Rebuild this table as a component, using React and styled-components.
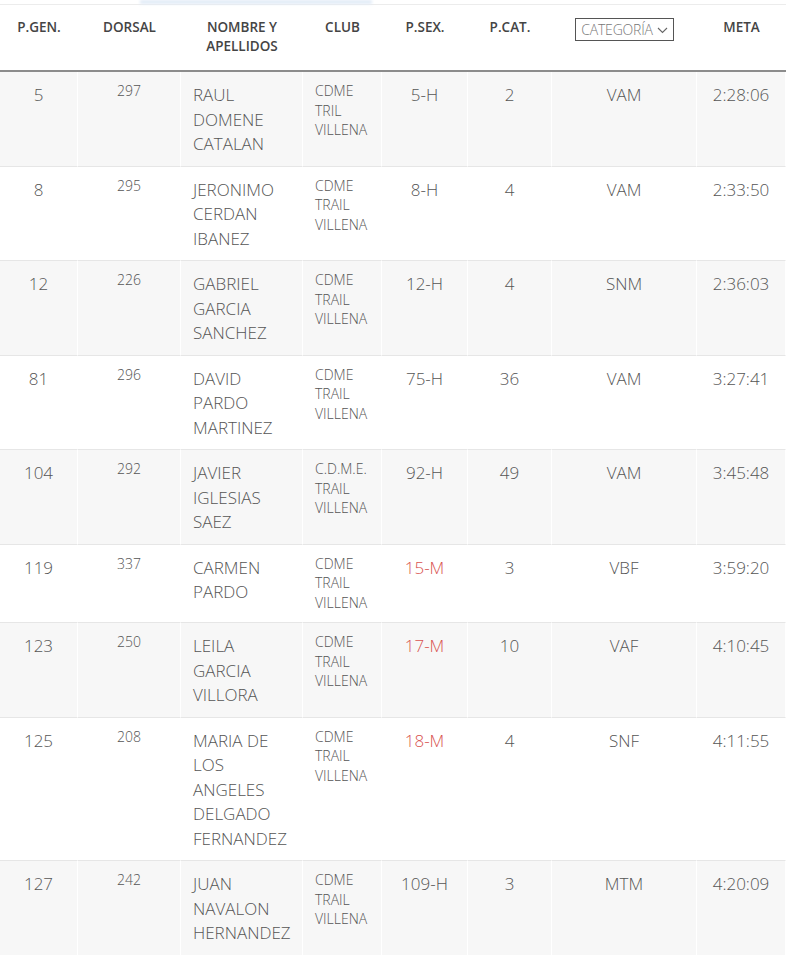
import styled, { createGlobalStyle } from 'styled-components';

const GlobalStyle = createGlobalStyle`
  html, body {
    margin: 0;
    padding: 0;
    background: #fff;
  }
  body {
    font-family: 'Open Sans', 'Liberation Sans', sans-serif;
    color: #555;
  }
`;

const columns = [
  { key: 'gen', title: 'P.GEN.', width: 78 },
  { key: 'dorsal', title: 'DORSAL', width: 103 },
  { key: 'name', title: 'NOMBRE Y APELLIDOS', width: 122 },
  { key: 'club', title: 'CLUB', width: 79 },
  { key: 'sex', title: 'P.SEX.', width: 86 },
  { key: 'cat', title: 'P.CAT.', width: 84 },
  { key: 'categoria', title: 'CATEGORÍA', width: 145 },
  { key: 'meta', title: 'META', width: 89 },
];

const results = [
  { gen: 5, dorsal: 297, name: 'RAUL DOMENE CATALAN', club: 'CDME TRIL VILLENA', sex: '5-H', cat: 2, categoria: 'VAM', meta: '2:28:06' },
  { gen: 8, dorsal: 295, name: 'JERONIMO CERDAN IBANEZ', club: 'CDME TRAIL VILLENA', sex: '8-H', cat: 4, categoria: 'VAM', meta: '2:33:50' },
  { gen: 12, dorsal: 226, name: 'GABRIEL GARCIA SANCHEZ', club: 'CDME TRAIL VILLENA', sex: '12-H', cat: 4, categoria: 'SNM', meta: '2:36:03' },
  { gen: 81, dorsal: 296, name: 'DAVID PARDO MARTINEZ', club: 'CDME TRAIL VILLENA', sex: '75-H', cat: 36, categoria: 'VAM', meta: '3:27:41' },
  { gen: 104, dorsal: 292, name: 'JAVIER IGLESIAS SAEZ', club: 'C.D.M.E. TRAIL VILLENA', sex: '92-H', cat: 49, categoria: 'VAM', meta: '3:45:48' },
  { gen: 119, dorsal: 337, name: 'CARMEN PARDO', club: 'CDME TRAIL VILLENA', sex: '15-M', cat: 3, categoria: 'VBF', meta: '3:59:20' },
  { gen: 123, dorsal: 250, name: 'LEILA GARCIA VILLORA', club: 'CDME TRAIL VILLENA', sex: '17-M', cat: 10, categoria: 'VAF', meta: '4:10:45' },
  { gen: 125, dorsal: 208, name: 'MARIA DE LOS ANGELES DELGADO FERNANDEZ', club: 'CDME TRAIL VILLENA', sex: '18-M', cat: 4, categoria: 'SNF', meta: '4:11:55' },
  { gen: 127, dorsal: 242, name: 'JUAN NAVALON HERNANDEZ', club: 'CDME TRAIL VILLENA', sex: '109-H', cat: 3, categoria: 'MTM', meta: '4:20:09' },
];

function Chevron() {
  return (
    <svg width="11" height="7" viewBox="0 0 11 7" fill="none">
      <path d="M1 1l4.5 4.5L10 1" stroke="#666" strokeWidth="1.1" />
    </svg>
  );
}

function App() {
  return (
    <>
      <GlobalStyle />
      <StPage>
        <StTopEdge>
          <StGlow />
        </StTopEdge>
        <StTable>
          <colgroup>
            {columns.map(col => (
              <col key={col.key} style={{ width: col.width }} />
            ))}
          </colgroup>
          <thead>
            <tr>
              {columns.map(col =>
                col.key === 'categoria' ? (
                  <StTh key={col.key}>
                    <StSelect>
                      {col.title}
                      <Chevron />
                    </StSelect>
                  </StTh>
                ) : (
                  <StTh key={col.key}>{col.title}</StTh>
                )
              )}
            </tr>
          </thead>
          <tbody>
            {results.map((row, i) => (
              <StRow key={row.gen} $striped={i % 2 === 0}>
                <StCell $size="big" $align="center">{row.gen}</StCell>
                <StCell $size="small" $align="center">{row.dorsal}</StCell>
                <StCell $size="big" $align="left" $wide>{row.name}</StCell>
                <StCell $size="small" $align="left">{row.club}</StCell>
                <StCell $size="big" $align="center" $female={row.sex.endsWith('M')}>
                  {row.sex}
                </StCell>
                <StCell $size="big" $align="center">{row.cat}</StCell>
                <StCell $size="big" $align="center">{row.categoria}</StCell>
                <StCell $size="big" $align="center">{row.meta}</StCell>
              </StRow>
            ))}
          </tbody>
        </StTable>
      </StPage>
    </>
  );
}

export default App;

const StPage = styled.div`
  width: 786px;
  background: #fff;
`;

const StTopEdge = styled.div`
  height: 4px;
  border-bottom: 1px solid #ececec;
  display: flex;
  padding-left: 140px;
`;

const StGlow = styled.div`
  width: 232px;
  height: 4px;
  background: #e1ebf7;
  filter: blur(1.5px);
`;

const StTable = styled.table`
  width: 786px;
  table-layout: fixed;
  border-collapse: separate;
  border-spacing: 0;
`;

const StTh = styled.th`
  vertical-align: top;
  padding: 13px 6px 0;
  height: 52px;
  font-size: 13.5px;
  line-height: 19px;
  font-weight: 600;
  color: #444;
  text-align: center;
  border-bottom: 2px solid #8c8c8c;
`;

const StSelect = styled.div`
  display: inline-flex;
  align-items: center;
  gap: 4px;
  height: 21px;
  padding: 0 5px;
  border: 1px solid #555;
  font-size: 14px;
  font-weight: 300;
  color: #777;
  letter-spacing: -0.2px;
  & > svg {
    margin-top: 1px;
  }
`;

const StRow = styled.tr`
  & > td {
    background: ${p => (p.$striped ? '#f7f7f7' : '#fff')};
  }
`;

const StCell = styled.td`
  vertical-align: top;
  padding: ${p => (p.$size === 'big' ? '11px 12px 9px' : '9px 12px 10px')};
  padding-right: ${p => (p.$wide ? '8px' : '12px')};
  font-size: ${p => (p.$size === 'big' ? '17px' : '14px')};
  line-height: ${p => (p.$size === 'big' ? '24.5px' : '19.5px')};
  font-weight: 300;
  color: ${p => (p.$female ? '#d9534f' : '#555')};
  text-align: ${p => p.$align};
  border-bottom: 1px solid #e6e6e6;
  border-right: 1px solid #fff;
  word-wrap: break-word;
`;
